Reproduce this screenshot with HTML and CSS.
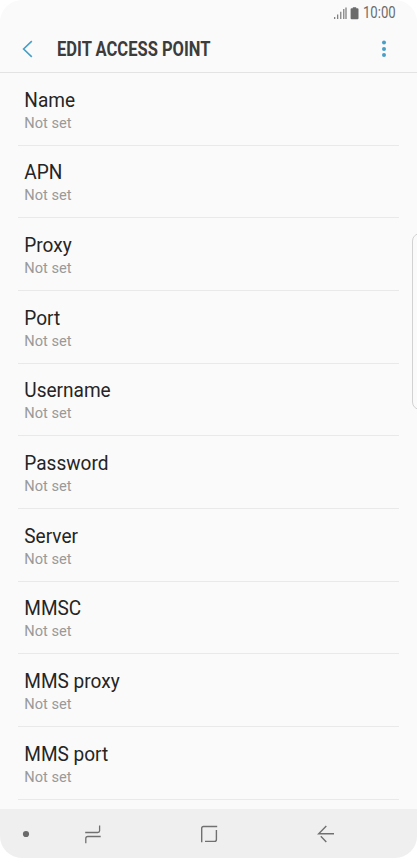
FILE: index.html
```
<!DOCTYPE html>
<html lang="en">
<head>
<meta charset="utf-8">
<title>Edit access point</title>
<link rel="stylesheet" href="styles.css">
</head>
<body>
<div class="phone">
  <div class="status">
    <svg class="signal" width="34" height="16" viewBox="0 0 34 16">
      <path d="M1.2 12v2M4.2 9.5V14M7.3 6.8V14M10.3 4V14M12.5 2.5V14" transform="translate(-.5 0)" fill="none" stroke="#6b6b6b" stroke-width="1.1"/>
      <path d="M16.6 4.3q0-1 1-1h1.2V2.2h3.4v1.1h1.3q1 0 1 1v9q0 .9-1 .9h-5.9q-1 0-1-.9z" fill="#6b6b6b"/>
    </svg>
    <span class="time">10:00</span>
  </div>
  <header class="bar">
    <svg class="back" width="12" height="18" viewBox="0 0 12 18"><path d="M9.8 1.2 1.6 9l8.2 7.8" fill="none" stroke="#489fc4" stroke-width="1.6"/></svg>
    <h1 class="title">EDIT ACCESS POINT</h1>
    <svg class="more" width="6" height="18" viewBox="0 0 6 18" fill="#489fc4"><circle cx="3" cy="2.6" r="2"/><circle cx="3" cy="8.9" r="2"/><circle cx="3" cy="15.1" r="2"/></svg>
  </header>
  <main class="list">
    <div class="row"><div class="name">Name</div><div class="value">Not set</div></div>
    <div class="row"><div class="name">APN</div><div class="value">Not set</div></div>
    <div class="row"><div class="name">Proxy</div><div class="value">Not set</div></div>
    <div class="row"><div class="name">Port</div><div class="value">Not set</div></div>
    <div class="row"><div class="name">Username</div><div class="value">Not set</div></div>
    <div class="row"><div class="name">Password</div><div class="value">Not set</div></div>
    <div class="row"><div class="name">Server</div><div class="value">Not set</div></div>
    <div class="row"><div class="name">MMSC</div><div class="value">Not set</div></div>
    <div class="row"><div class="name">MMS proxy</div><div class="value">Not set</div></div>
    <div class="row"><div class="name">MMS port</div><div class="value">Not set</div></div>
  </main>
  <nav class="nav">
    <svg class="dot" width="8" height="8" viewBox="0 0 8 8"><circle cx="4" cy="4" r="3.1" fill="#6b6b6b"/></svg>
    <svg class="recent" width="18" height="20" viewBox="0 0 18 20" fill="none" stroke="#707070" stroke-width="1.3"><path d="M1.2 8.5h12.6q1.8 0 1.8-1.8V1.5M16.7 12.5H3.8q-2 0-2 2V19.3"/></svg>
    <svg class="home" width="18" height="18" viewBox="0 0 18 18" fill="none" stroke="#707070" stroke-width="1.4"><path d="M1.7 17.2V3.3q0-1.8 1.8-1.8H17.2M16.4 5v9.5q0 1.9-1.9 1.9H5"/></svg>
    <svg class="return" width="18" height="18" viewBox="0 0 18 18" fill="none" stroke="#707070" stroke-width="1.4"><path d="M9.3 1 1.7 8.8H17M3.8 11.2 9.3 17"/></svg>
  </nav>
  <div class="edge"></div>
</div>
</body>
</html>
```

FILE: styles.css
```
body {
  margin: 0;
  background: #fff;
  font-family: Roboto, "Liberation Sans", sans-serif;
}
.phone {
  position: relative;
  width: 417px;
  height: 858px;
  overflow: hidden;
  border-radius: 22px;
  background: #fafafa;
  display: flex;
  flex-direction: column;
}
.status {
  height: 26px;
  flex: none;
  display: flex;
  align-items: center;
  padding-left: 334px;
}
.signal { flex: none; margin-right: -5px; }
.time {
  font-size: 16px;
  line-height: 26px;
  color: #6b6b6b;
  transform: scaleX(0.82);
  transform-origin: left;
}
.bar {
  height: 46px;
  flex: none;
  display: flex;
  align-items: center;
  border-bottom: 1px solid #e3e3e3;
  padding: 0 30px 0 22px;
}
.title {
  flex: 1;
  margin: 1px 0 0 23px;
  font-size: 19.5px;
  line-height: 24px;
  font-weight: 700;
  color: #3c3c3c;
  white-space: nowrap;
  transform: scaleX(0.848);
  transform-origin: left;
}
.list { flex: 1; padding: 0 18px; }
.row {
  box-sizing: border-box;
  height: 72.67px;
  padding: 14.7px 6px 0;
  border-bottom: 1px solid #e9e9e9;
}
.name {
  font-size: 20px;
  line-height: 25px;
  color: #252525;
  transform: translateX(0.3px) scaleX(0.952);
  transform-origin: left;
}
.value {
  font-size: 15px;
  line-height: 20px;
  color: #999;
  transform: translateX(0.3px) scaleX(0.975);
  transform-origin: left;
}
.nav {
  height: 49px;
  flex: none;
  display: flex;
  align-items: center;
  background: #efefef;
  padding-left: 22px;
}
.recent { margin-left: 54px; }
.home { margin-left: 98px; }
.return { margin-left: 99px; }
.edge {
  position: absolute;
  left: 412px;
  top: 233px;
  width: 20px;
  height: 175px;
  border: 1px solid #d2d2d2;
  border-radius: 8px;
}
```
